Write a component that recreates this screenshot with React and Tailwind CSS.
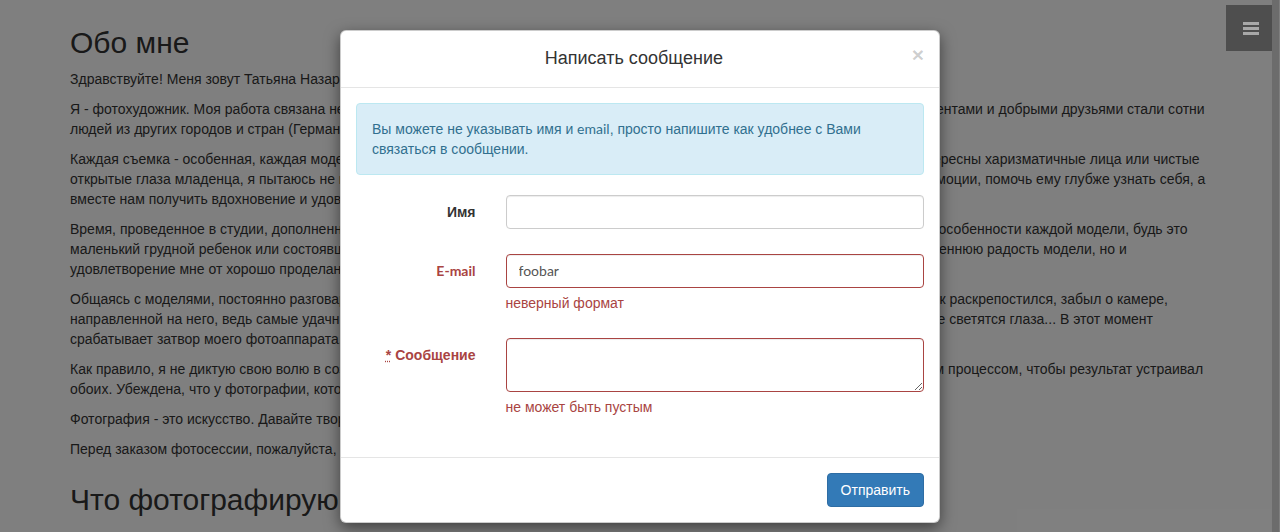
import React from "react";

const latin = "font-['Lato',sans-serif]";

// строки фона: левая часть видна, середина под модальным окном, правая снова видна
const paragraphs = [
  ["Здравствуйте! Меня зовут Татьяна Назарова, и я рада приветствовать Вас на моем сайте."],
  [
    "Я - фотохудожник. Моя работа связана не только с портретной фотографией, но прежде всего с людьми. За годы работы моими клиентами и добрыми друзьями стали сотни",
    "людей из других городов и стран (Германия, Италия, Франция, Израиль).",
  ],
  [
    "Каждая съемка - особенная, каждая модель уникальна. Мне как мастеру всегда интересны самые разные люди, мне одинаково интересны харизматичные лица или чистые",
    "открытые глаза младенца, я пытаюсь не просто запечатлеть внешность, а раскрыть внутренний мир человека, передать его яркие эмоции, помочь ему глубже узнать себя, а",
    "вместе нам получить вдохновение и удовольствие от совместного творчества.",
  ],
  [
    "Время, проведенное в студии, дополненное интересным и приятным общением, позволяет мне лучше почувствовать и подчеркнуть особенности каждой модели, будь это",
    "маленький грудной ребенок или состоявшийся взрослый человек. Результат нашей совместной работы нам приносит не только искреннюю радость модели, но и",
    "удовлетворение мне от хорошо проделанной работы.",
  ],
  [
    "Общаясь с моделями, постоянно разговаривая с ними на самые разные темы, я всегда очень стараюсь добиться того, чтобы человек раскрепостился, забыл о камере,",
    "направленной на него, ведь самые удачные и живые снимки получаются именно тогда, когда моя модель искренне улыбается и у нее светятся глаза... В этот момент",
    "срабатывает затвор моего фотоаппарата.",
  ],
  [
    "Как правило, я не диктую свою волю в создании нового образа, а стараюсь вместе с моделью бережно и чутко управлять творческим процессом, чтобы результат устраивал",
    "обоих. Убеждена, что у фотографии, которая создана с любовью, есть душа.",
  ],
  ["Фотография - это искусство. Давайте творить вместе!"],
  ["Перед заказом фотосессии, пожалуйста, ознакомьтесь с условиями работы."],
];

function Page() {
  return (
    <div className="mx-auto w-[1170px] px-[15px] pt-[26px]">
      <h2 className="mb-[10px] text-[30px] leading-[33px] font-normal">Обо мне</h2>
      {paragraphs.map((lines, i) => (
        <div key={i} className="mb-[10px]">
          {lines.map((line, j) => (
            <div key={j} className="whitespace-nowrap">
              {line}
            </div>
          ))}
        </div>
      ))}
      <h2 className="mt-[24px] text-[30px] leading-[33px] font-normal">Что фотографирую</h2>
    </div>
  );
}

function Modal() {
  return (
    <div className="absolute left-[340px] top-[30px] w-[600px] rounded-[6px] border border-black/20 bg-white shadow-[0_5px_15px_rgba(0,0,0,0.5)]">
      {/* header */}
      <div className="flex items-start border-b border-[#e5e5e5] p-[15px]">
        <h4 className="flex-1 text-center text-[18px] leading-[25.7px] text-[#333]">Написать сообщение</h4>
        <button className="-mt-[2px] text-[21px] leading-[21px] font-bold text-black/20">×</button>
      </div>

      {/* body */}
      <div className="p-[15px]">
        <div className="mb-[20px] rounded-[4px] border border-[#bce8f1] bg-[#d9edf7] p-[15px] text-[#31708f]">
          Вы можете не указывать имя и <span className={latin}>email</span>, просто напишите как удобнее с Вами
          связаться в сообщении.
        </div>

        <div className="-mx-[15px] mb-[25px] flex">
          <label className="w-1/4 px-[15px] pt-[7px] text-right font-bold text-[#333]">Имя</label>
          <div className="w-3/4 px-[15px]">
            <input
              type="text"
              className="block h-[34px] w-full rounded-[4px] border border-[#ccc] px-[12px] shadow-[inset_0_1px_1px_rgba(0,0,0,0.075)] outline-none"
            />
          </div>
        </div>

        <div className="-mx-[15px] mb-[15px] flex">
          <label className={`w-1/4 px-[15px] pt-[7px] text-right font-bold text-[#a94442] ${latin}`}>E-mail</label>
          <div className="w-3/4 px-[15px]">
            <input
              type="text"
              defaultValue="foobar"
              className={`block h-[34px] w-full rounded-[4px] border border-[#a94442] px-[12px] text-[14px] text-[#555] shadow-[inset_0_1px_1px_rgba(0,0,0,0.075)] outline-none ${latin}`}
            />
            <div className="mt-[5px] mb-[10px] text-[#a94442]">неверный формат</div>
          </div>
        </div>

        <div className="-mx-[15px] mb-[15px] flex">
          <label className="w-1/4 px-[15px] pt-[7px] text-right font-bold text-[#a94442]">
            <abbr title="обязательное поле" className="cursor-help underline decoration-dotted">
              *
            </abbr>{" "}
            Сообщение
          </label>
          <div className="w-3/4 px-[15px]">
            <textarea
              rows={2}
              className="block h-[54px] w-full rounded-[4px] border border-[#a94442] px-[12px] py-[6px] shadow-[inset_0_1px_1px_rgba(0,0,0,0.075)] outline-none"
            />
            <div className="mt-[5px] mb-[10px] text-[#a94442]">не может быть пустым</div>
          </div>
        </div>
      </div>

      {/* footer */}
      <div className="flex justify-end border-t border-[#e5e5e5] p-[15px]">
        <button className="rounded-[4px] border border-[#2e6da4] bg-[#337ab7] px-[13px] py-[6px] text-[14px] leading-[20px] text-white">
          Отправить
        </button>
      </div>
    </div>
  );
}

export default function App() {
  return (
    <div className="relative h-[532px] overflow-hidden bg-white font-['Liberation_Sans',Arial,sans-serif] text-[14px] leading-[20px] text-[#333]">
      <Page />
      <div className="absolute inset-0 bg-black/50" />

      {/* кнопка меню */}
      <button className="absolute right-[5px] top-[5px] flex h-[46px] w-[49px] flex-col items-center justify-center gap-[2px] bg-[#4e4e4e]">
        <span className="block h-[3px] w-[16px] bg-[#a8a8a8]" />
        <span className="block h-[3px] w-[16px] bg-[#a8a8a8]" />
        <span className="block h-[3px] w-[16px] bg-[#a8a8a8]" />
      </button>
      <div className="absolute right-[1px] top-0 h-full w-[7px] bg-[#6c6c6c]" />

      <Modal />
    </div>
  );
}
